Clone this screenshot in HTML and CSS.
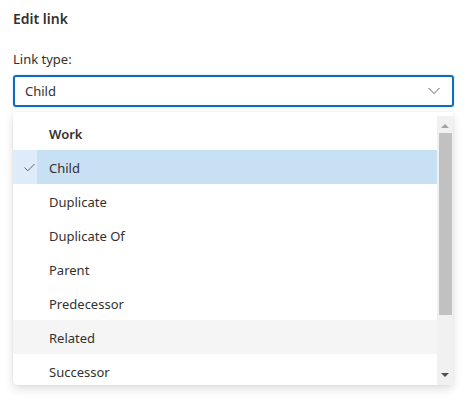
FILE: index.html
```html
<!DOCTYPE html>
<html>
<head>
<meta charset="utf-8">
<link rel="stylesheet" href="styles.css">
</head>
<body>
<div class="page">
  <div class="title">Edit link</div>
  <div class="label">Link type:</div>
  <div class="select">
    <span class="value">Child</span>
    <svg class="chev" width="12" height="8" viewBox="0 0 12 8"><path d="M0.5 1 L6 6.5 L11.5 1" fill="none" stroke="#605e5c" stroke-width="1"/></svg>
  </div>
  <div class="panel">
    <div class="list">
      <div class="row header"><span class="chk"></span><span class="txt">Work</span></div>
      <div class="row selected"><span class="chk"><svg width="11" height="9" viewBox="0 0 11 9"><path d="M0.5 4.5 L3.8 7.8 L10.5 1" fill="none" stroke="#605e5c" stroke-width="1"/></svg></span><span class="txt">Child</span></div>
      <div class="row"><span class="chk"></span><span class="txt">Duplicate</span></div>
      <div class="row"><span class="chk"></span><span class="txt">Duplicate Of</span></div>
      <div class="row"><span class="chk"></span><span class="txt">Parent</span></div>
      <div class="row"><span class="chk"></span><span class="txt">Predecessor</span></div>
      <div class="row hover"><span class="chk"></span><span class="txt">Related</span></div>
      <div class="row"><span class="chk"></span><span class="txt">Successor</span></div>
    </div>
    <div class="scrollbar">
      <div class="arrow up"></div>
      <div class="thumb"></div>
      <div class="arrow down"></div>
    </div>
  </div>
</div>
</body>
</html>
```
FILE: styles.css
```css
html, body {
  margin: 0;
  padding: 0;
  background: #ffffff;
}
body {
  font-family: "Noto Sans", "Open Sans", sans-serif;
  color: #323130;
  width: 468px;
  height: 402px;
  overflow: hidden;
}
.page {
  padding: 9px 14px 0 13px;
}
.title {
  font-size: 14px;
  font-weight: 600;
  line-height: 20px;
  height: 20px;
}
.label {
  margin-top: 21px;
  font-size: 13px;
  line-height: 18px;
  height: 18px;
}
.select {
  margin-top: 7px;
  box-sizing: border-box;
  height: 32px;
  width: 441px;
  border: 2px solid #0f6cbd;
  border-radius: 3px;
  box-shadow: 0 0 2px rgba(15,108,189,0.35);
  display: flex;
  align-items: center;
  justify-content: space-between;
  padding: 0 12px 0 10px;
}
.value {
  font-size: 13px;
  line-height: 18px;
}
.chev {
  display: block;
}
.panel {
  margin-top: 5px;
  width: 440px;
  height: 273px;
  display: flex;
  background: #ffffff;
  border-radius: 0 0 4px 4px;
  box-shadow: 0 4px 10px rgba(0,0,0,0.13), 0 0 3px rgba(0,0,0,0.06);
  overflow: hidden;
}
.list {
  flex: 1;
  padding-top: 4px;
  overflow: hidden;
}
.row {
  display: flex;
  align-items: center;
  height: 34px;
  font-size: 13px;
  line-height: 18px;
}
.row .chk {
  width: 24px;
  height: 34px;
  display: flex;
  align-items: center;
  justify-content: flex-end;
  padding: 1px 2px 0 0;
  box-sizing: border-box;
}
.row .txt {
  flex: 1;
  height: 34px;
  display: flex;
  align-items: center;
  padding: 1px 0 0 12px;
  box-sizing: border-box;
}
.row.header {
  font-weight: 600;
}
.row.selected .chk {
  background: #deecf9;
}
.row.selected .txt {
  background: #c7e0f4;
}
.row.hover {
  background: #f5f5f5;
}
.scrollbar {
  width: 16px;
  margin-top: 4px;
  background: #f1f1f1;
  display: flex;
  flex-direction: column;
  align-items: center;
}
.thumb {
  width: 13px;
  height: 182px;
  background: #c1c1c1;
  margin-top: 5px;
}
.arrow {
  width: 0;
  height: 0;
  border-left: 4px solid transparent;
  border-right: 4px solid transparent;
}
.arrow.up {
  margin-top: 8px;
  border-bottom: 4px solid #a3a3a3;
}
.arrow.down {
  margin-top: auto;
  margin-bottom: 8px;
  border-top: 4px solid #505050;
}
```
